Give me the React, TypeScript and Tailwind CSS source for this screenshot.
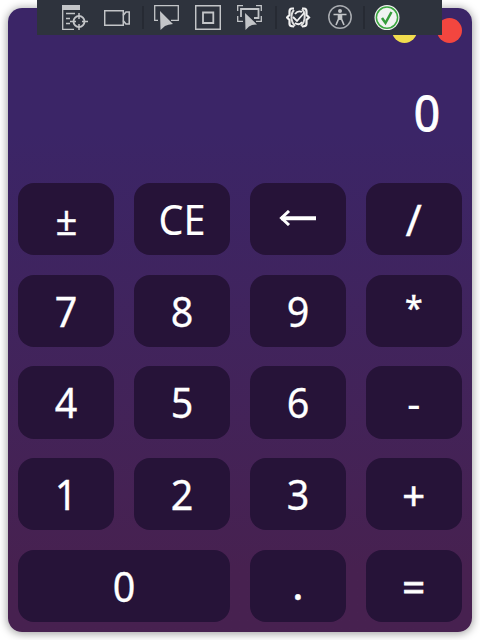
import type { ReactNode } from "react";

type Key = { label: string; kind?: "wide" | "arrow"; shape: string };

const digit = "text-[42px] scale-x-[0.94] [-webkit-text-stroke:0.3px_white]";

const keys: Key[] = [
  { label: "±", shape: "text-[40px] scale-x-[0.96] translate-y-px [-webkit-text-stroke:0.3px_white]" },
  { label: "CE", shape: "text-[42px] scale-x-[0.94] [-webkit-text-stroke:0.1px_white]" },
  { label: "←", kind: "arrow", shape: "" },
  { label: "/", shape: "text-[44px] [-webkit-text-stroke:0.3px_white]" },
  { label: "7", shape: digit },
  { label: "8", shape: digit },
  { label: "9", shape: digit },
  { label: "*", shape: "text-[32px] -translate-y-[3px] [-webkit-text-stroke:0.5px_white]" },
  { label: "4", shape: digit },
  { label: "5", shape: digit },
  { label: "6", shape: digit },
  { label: "-", shape: "text-[42px] translate-y-px" },
  { label: "1", shape: digit },
  { label: "2", shape: digit },
  { label: "3", shape: digit },
  { label: "+", shape: "text-[40px] translate-y-px [-webkit-text-stroke:0.6px_white]" },
  { label: "0", kind: "wide", shape: digit },
  { label: ".", shape: "text-[42px] -translate-y-[2px] [-webkit-text-stroke:0.5px_white]" },
  { label: "=", shape: "text-[40px] translate-y-px [-webkit-text-stroke:0.8px_white]" },
];

function Icon({ children, className = "" }: { children: ReactNode; className?: string }) {
  return (
    <svg className={`h-[26px] w-[26px] shrink-0 ${className}`} viewBox="0 0 26 26" fill="none" stroke="#c3c5c8" strokeWidth="1.3">
      {children}
    </svg>
  );
}

function Separator({ className }: { className: string }) {
  return <div className={`h-[23px] w-[2px] shrink-0 bg-[#262a33] ${className}`} />;
}

const cursor = "M6 6 L19 19 L14.5 19.7 L11 21 L6.5 25 Z";

function DebugToolbar() {
  return (
    <div className="absolute left-[37px] top-0 flex h-[35px] w-[405px] items-center bg-[#2e333d] pl-[25px]">
      <Icon>
        <path d="M0 0H18V5H0Z" fill="#c3c5c8" stroke="none" />
        <path d="M.7 4V24.4H12M4 8.5H13M4 13.5H8M4 18.5H8" />
        <circle cx="17" cy="16.5" r="5.5" strokeWidth="1.9" />
        <path d="M17 8V14M17 19V25M8 16.5H14M20 16.5H26" strokeWidth="1.5" />
      </Icon>
      <Icon className="ml-4">
        <path d="M.7 5.7H19.3V20.3H.7Z" strokeWidth="1.5" />
        <path d="M19 10.5L22 7H25.3V19H22L19 15.5" strokeWidth="1.7" />
      </Icon>
      <Separator className="ml-3" />
      <Icon className="ml-[10px]">
        <path d="M4 15.3H.7V.7H24.3V15.3H17" />
        <path d={cursor} fill="#c3c5c8" stroke="none" />
      </Icon>
      <Icon className="ml-[15px]">
        <path d="M.7 .7H25.3V24.3H.7Z" strokeWidth="1.5" />
        <path d="M8 7.5H18.3V18H8Z" strokeWidth="1.8" />
      </Icon>
      <Icon className="ml-4">
        <path d="M.7 6V.7H6M19 .7H24.3V6M.7 11V16.3H6M24.3 11V16.3H19" />
        <path d="M4 12V4H21.5V13H17" strokeWidth="1.8" />
        <path d="M8 8L20 19.5L15 20L12 21.5L8.5 25Z" fill="#c3c5c8" stroke="none" />
      </Icon>
      <Separator className="ml-3" />
      <Icon className="ml-[9px]">
        <path d="M8 3.5H6Q3.5 3.5 3.5 6.5V10L1 12.5L3.5 15V19Q3.5 21.5 8 21.5M16 3.5H18Q20.5 3.5 20.5 6.5V10L23 12.5L20.5 15V19Q20.5 21.5 16 21.5" stroke="#f1f1f1" strokeWidth="2.2" />
        <path d="M8 5Q5 8 5.5 14Q6 18 9 21M16 4Q19.5 8 18.5 14Q18 18 15 21" stroke="#dedede" strokeWidth="2" />
        <path d="M7 12L11 16L18 8M9 9Q12 5 16 7M9 18Q13 21 16 17" stroke="#f1f1f1" strokeWidth="1.8" />
      </Icon>
      <Icon className="ml-4">
        <circle cx="12" cy="12" r="11.2" stroke="#a9acb1" strokeWidth="1.5" />
        <circle cx="12" cy="6" r="2" fill="#c3c5c8" stroke="none" />
        <path d="M5.5 9.5H18.5M12 9.5V15M10.5 9.5V14L8 20M13.5 9.5V14L16 20" strokeWidth="1.6" />
      </Icon>
      <Separator className="ml-[9px]" />
      <Icon className="ml-[9px]">
        <circle cx="13" cy="12.6" r="12.5" fill="#f1f3f1" stroke="none" />
        <circle cx="13" cy="12.6" r="10.6" stroke="#3ca640" strokeWidth="1.5" />
        <path d="M8 13L11.5 18L17.5 7" stroke="#369c3b" strokeWidth="2.5" />
      </Icon>
    </div>
  );
}

export default function App() {
  return (
    <div className="relative h-[640px] w-[480px] overflow-hidden bg-white p-2 font-['Noto_Sans','Open_Sans',sans-serif] text-white">
      <main className="flex h-[624px] w-[464px] flex-col rounded-[14px] bg-linear-to-b from-[#3b2567] from-20% to-[#472150] to-90% px-[10px] pb-[10px] shadow-[0_1px_8px_1px_rgba(0,0,0,0.36)]">
        <header className="flex h-[36px] shrink-0 items-end justify-end gap-5 pb-px">
          <span className="h-[25px] w-[25px] rounded-full bg-[#f1dd4e]" />
          <span className="h-[25px] w-[25px] rounded-full bg-[#f3463f]" />
        </header>
        <div className="flex h-[139px] shrink-0 items-center justify-end pr-[22px]">
          <output className="origin-right -translate-y-px scale-x-[0.94] text-[49px] leading-none [-webkit-text-stroke:0.9px_white]">0</output>
        </div>
        <div className="grid min-h-0 flex-1 grid-cols-4 grid-rows-5 gap-x-[19.4px] gap-y-[19.2px]">
          {keys.map(({ label, kind, shape }) => (
            <button
              key={label}
              aria-label={label}
              className={`flex min-h-0 min-w-0 items-center justify-center rounded-[16px] bg-[#261338] leading-none ${kind === "wide" ? "col-span-2" : ""}`}
            >
              {kind === "arrow" ? (
                <svg className="h-4 w-[38px] -translate-y-px" viewBox="0 0 38 16" fill="none" stroke="white">
                  <path d="M2 8.2H37" strokeWidth="4" />
                  <path d="M10 1L2.5 8L10 15" strokeWidth="3" />
                </svg>
              ) : (
                <span className={`block leading-none ${shape}`}>{label}</span>
              )}
            </button>
          ))}
        </div>
      </main>
      <DebugToolbar />
    </div>
  );
}
